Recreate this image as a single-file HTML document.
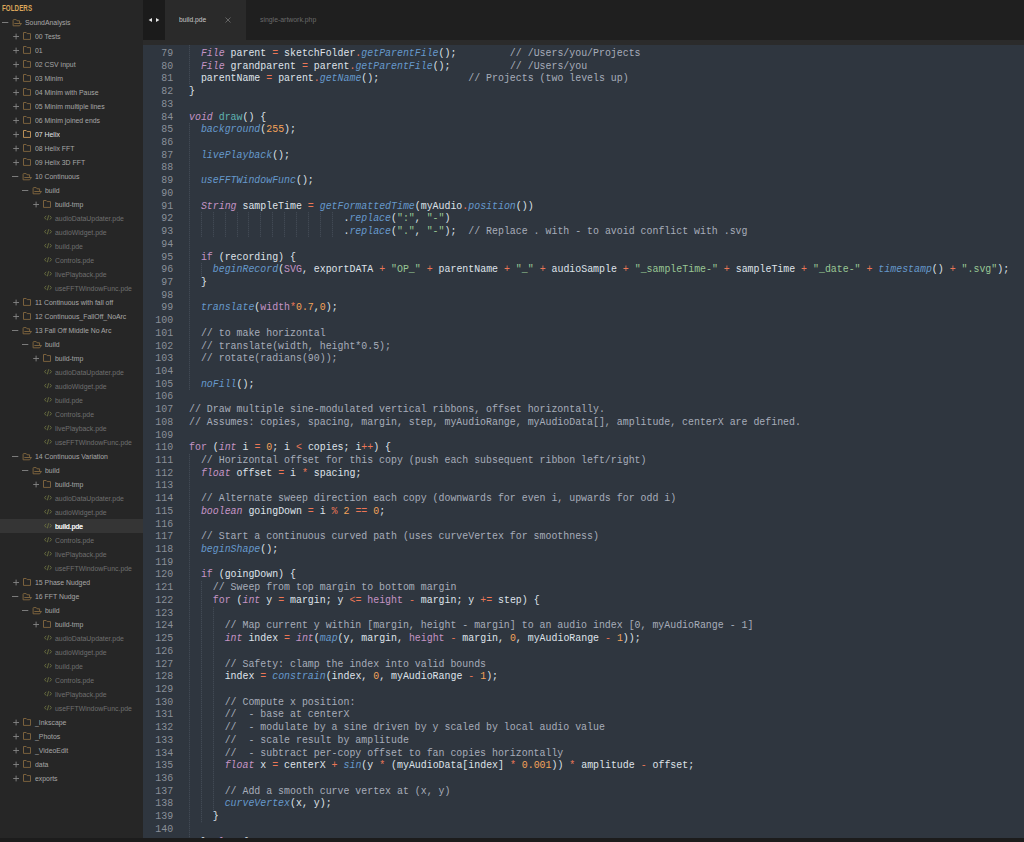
<!DOCTYPE html>
<html><head><meta charset="utf-8">
<style>
html,body{margin:0;padding:0;width:1024px;height:842px;overflow:hidden;background:#262626;}
body{position:relative;font-family:"Liberation Sans",sans-serif;}
#side{position:absolute;left:0;top:0;width:143px;height:842px;background:#262626;overflow:hidden;}
#side .hdr{position:absolute;left:2px;top:3.2px;font:bold 8.4px/10px "Liberation Sans",sans-serif;color:#dba65a;transform:scaleX(.74);transform-origin:0 0;letter-spacing:0.1px;}
.row{position:absolute;left:0;width:143px;height:14px;}
.row.sel{background:#353535;}
.row i{position:absolute;display:block;line-height:0;}
.row i svg{display:block;}
.tg{top:4px;color:#858585;}
.fo{top:3.6px;color:#7f653e;}
.fc{top:3.4px;color:#82673f;}
.fi{top:4.2px;color:#6e7442;}
.nm{position:absolute;top:2.9px;font-size:8px;line-height:10px;white-space:nowrap;transform:scaleX(.86);transform-origin:0 0;color:#a6a6a6;}
.file .nm{color:#6f6f6f;}
.hi .nm{color:#e2e2e2;}
.hi .fc{color:#c9995a;}
.sel .nm{color:#f4f4f4;text-shadow:0.3px 0 0 #f4f4f4;}
#tabs{position:absolute;left:143px;top:0;width:881px;height:40px;background:#1f1f1f;}
#arrows{position:absolute;left:143px;top:0;width:22px;height:40px;background:#1b1b1b;}
#tab1{position:absolute;left:165px;top:0;width:81px;height:40px;background:#2a2a2a;}
#strip{position:absolute;left:143px;top:40px;width:881px;height:5px;background:#2b2b2b;}
#code{position:absolute;left:143px;top:45px;width:881px;height:793px;background:#2f363f;overflow:hidden;}
#bottom{position:absolute;left:0;top:838px;width:1024px;height:4px;background:#1c1c1c;}
#nums{position:absolute;left:0;top:2px;width:30.2px;text-align:right;transform-origin:100% 0 !important;font-family:"Liberation Mono",monospace;color:#8a9099;}
#lines{position:absolute;left:46px;top:2px;font-family:"Liberation Mono",monospace;color:#dfe3ea;white-space:pre;}
#nums div,#lines div{height:12.73px;line-height:12.73px;}
.mono{font-size:11px;transform:scaleX(.9);transform-origin:0 0;}
b{font-weight:normal;}
.gd{position:absolute;width:1px;background:repeating-linear-gradient(to bottom,#414953 0 1px,#343b45 1px 2px);}
b.t{color:#c594c5;font-style:italic;}
b.k{color:#c594c5;}
b.v{color:#c594c5;}
b.f{color:#6699cc;font-style:italic;}
b.e{color:#5fb3b3;}
b.o{color:#ec7656;}
b.n{color:#f4a35a;}
b.s{color:#99c794;}
b.c{color:#a7adba;}
.tabtxt{position:absolute;font-size:8px;line-height:10px;white-space:nowrap;transform:scaleX(.84);transform-origin:0 0;}
</style></head><body>
<div id="side">
<div class="hdr">FOLDERS</div>
<div class="row dir" style="top:15px"><i class="tg" style="left:2.2px"><svg width="7" height="7" viewBox="0 0 7 7"><path d="M0 3.5 H6.3" stroke="currentColor" stroke-width="0.9"/></svg></i><i class="fo" style="left:12.4px"><svg width="11" height="9" viewBox="0 0 11 9"><path d="M1.1 6.8 V1.2 Q1.1 0.6 1.7 0.6 H4.2 L5.1 1.8 H7.6 V4.4 M2.3 4.5 H9.5 L7.7 6.8 H1.1" fill="none" stroke="currentColor" stroke-width="0.95" stroke-linejoin="round"/></svg></i><span class="nm" style="left:25px">SoundAnalysis</span></div>
<div class="row dir" style="top:29px"><i class="tg" style="left:12.5px"><svg width="7" height="7" viewBox="0 0 7 7"><path d="M0.2 3.5 H6 M3.1 0.6 V6.4" stroke="currentColor" stroke-width="0.9"/></svg></i><i class="fc" style="left:22.7px"><svg width="9" height="9" viewBox="0 0 9 9"><path d="M0.5 0.5 H3.2 L4.2 1.6 H7.5 V7.4 H0.5 Z" fill="none" stroke="currentColor" stroke-width="0.9" stroke-linejoin="round"/></svg></i><span class="nm" style="left:35px">00 Tests</span></div>
<div class="row dir" style="top:43px"><i class="tg" style="left:12.5px"><svg width="7" height="7" viewBox="0 0 7 7"><path d="M0.2 3.5 H6 M3.1 0.6 V6.4" stroke="currentColor" stroke-width="0.9"/></svg></i><i class="fc" style="left:22.7px"><svg width="9" height="9" viewBox="0 0 9 9"><path d="M0.5 0.5 H3.2 L4.2 1.6 H7.5 V7.4 H0.5 Z" fill="none" stroke="currentColor" stroke-width="0.9" stroke-linejoin="round"/></svg></i><span class="nm" style="left:35px">01</span></div>
<div class="row dir" style="top:57px"><i class="tg" style="left:12.5px"><svg width="7" height="7" viewBox="0 0 7 7"><path d="M0.2 3.5 H6 M3.1 0.6 V6.4" stroke="currentColor" stroke-width="0.9"/></svg></i><i class="fc" style="left:22.7px"><svg width="9" height="9" viewBox="0 0 9 9"><path d="M0.5 0.5 H3.2 L4.2 1.6 H7.5 V7.4 H0.5 Z" fill="none" stroke="currentColor" stroke-width="0.9" stroke-linejoin="round"/></svg></i><span class="nm" style="left:35px">02 CSV input</span></div>
<div class="row dir" style="top:71px"><i class="tg" style="left:12.5px"><svg width="7" height="7" viewBox="0 0 7 7"><path d="M0.2 3.5 H6 M3.1 0.6 V6.4" stroke="currentColor" stroke-width="0.9"/></svg></i><i class="fc" style="left:22.7px"><svg width="9" height="9" viewBox="0 0 9 9"><path d="M0.5 0.5 H3.2 L4.2 1.6 H7.5 V7.4 H0.5 Z" fill="none" stroke="currentColor" stroke-width="0.9" stroke-linejoin="round"/></svg></i><span class="nm" style="left:35px">03 Minim</span></div>
<div class="row dir" style="top:85px"><i class="tg" style="left:12.5px"><svg width="7" height="7" viewBox="0 0 7 7"><path d="M0.2 3.5 H6 M3.1 0.6 V6.4" stroke="currentColor" stroke-width="0.9"/></svg></i><i class="fc" style="left:22.7px"><svg width="9" height="9" viewBox="0 0 9 9"><path d="M0.5 0.5 H3.2 L4.2 1.6 H7.5 V7.4 H0.5 Z" fill="none" stroke="currentColor" stroke-width="0.9" stroke-linejoin="round"/></svg></i><span class="nm" style="left:35px">04 Minim with Pause</span></div>
<div class="row dir" style="top:99px"><i class="tg" style="left:12.5px"><svg width="7" height="7" viewBox="0 0 7 7"><path d="M0.2 3.5 H6 M3.1 0.6 V6.4" stroke="currentColor" stroke-width="0.9"/></svg></i><i class="fc" style="left:22.7px"><svg width="9" height="9" viewBox="0 0 9 9"><path d="M0.5 0.5 H3.2 L4.2 1.6 H7.5 V7.4 H0.5 Z" fill="none" stroke="currentColor" stroke-width="0.9" stroke-linejoin="round"/></svg></i><span class="nm" style="left:35px">05 Minim multiple lines</span></div>
<div class="row dir" style="top:113px"><i class="tg" style="left:12.5px"><svg width="7" height="7" viewBox="0 0 7 7"><path d="M0.2 3.5 H6 M3.1 0.6 V6.4" stroke="currentColor" stroke-width="0.9"/></svg></i><i class="fc" style="left:22.7px"><svg width="9" height="9" viewBox="0 0 9 9"><path d="M0.5 0.5 H3.2 L4.2 1.6 H7.5 V7.4 H0.5 Z" fill="none" stroke="currentColor" stroke-width="0.9" stroke-linejoin="round"/></svg></i><span class="nm" style="left:35px">06 Minim joined ends</span></div>
<div class="row dir hi" style="top:127px"><i class="tg" style="left:12.5px"><svg width="7" height="7" viewBox="0 0 7 7"><path d="M0.2 3.5 H6 M3.1 0.6 V6.4" stroke="currentColor" stroke-width="0.9"/></svg></i><i class="fc" style="left:22.7px"><svg width="9" height="9" viewBox="0 0 9 9"><path d="M0.5 0.5 H3.2 L4.2 1.6 H7.5 V7.4 H0.5 Z" fill="none" stroke="currentColor" stroke-width="0.9" stroke-linejoin="round"/></svg></i><span class="nm" style="left:35px">07 Helix</span></div>
<div class="row dir" style="top:141px"><i class="tg" style="left:12.5px"><svg width="7" height="7" viewBox="0 0 7 7"><path d="M0.2 3.5 H6 M3.1 0.6 V6.4" stroke="currentColor" stroke-width="0.9"/></svg></i><i class="fc" style="left:22.7px"><svg width="9" height="9" viewBox="0 0 9 9"><path d="M0.5 0.5 H3.2 L4.2 1.6 H7.5 V7.4 H0.5 Z" fill="none" stroke="currentColor" stroke-width="0.9" stroke-linejoin="round"/></svg></i><span class="nm" style="left:35px">08 Helix FFT</span></div>
<div class="row dir" style="top:155px"><i class="tg" style="left:12.5px"><svg width="7" height="7" viewBox="0 0 7 7"><path d="M0.2 3.5 H6 M3.1 0.6 V6.4" stroke="currentColor" stroke-width="0.9"/></svg></i><i class="fc" style="left:22.7px"><svg width="9" height="9" viewBox="0 0 9 9"><path d="M0.5 0.5 H3.2 L4.2 1.6 H7.5 V7.4 H0.5 Z" fill="none" stroke="currentColor" stroke-width="0.9" stroke-linejoin="round"/></svg></i><span class="nm" style="left:35px">09 Helix 3D FFT</span></div>
<div class="row dir" style="top:169px"><i class="tg" style="left:12.2px"><svg width="7" height="7" viewBox="0 0 7 7"><path d="M0 3.5 H6.3" stroke="currentColor" stroke-width="0.9"/></svg></i><i class="fo" style="left:22.4px"><svg width="11" height="9" viewBox="0 0 11 9"><path d="M1.1 6.8 V1.2 Q1.1 0.6 1.7 0.6 H4.2 L5.1 1.8 H7.6 V4.4 M2.3 4.5 H9.5 L7.7 6.8 H1.1" fill="none" stroke="currentColor" stroke-width="0.95" stroke-linejoin="round"/></svg></i><span class="nm" style="left:35px">10 Continuous</span></div>
<div class="row dir" style="top:183px"><i class="tg" style="left:22.2px"><svg width="7" height="7" viewBox="0 0 7 7"><path d="M0 3.5 H6.3" stroke="currentColor" stroke-width="0.9"/></svg></i><i class="fo" style="left:32.4px"><svg width="11" height="9" viewBox="0 0 11 9"><path d="M1.1 6.8 V1.2 Q1.1 0.6 1.7 0.6 H4.2 L5.1 1.8 H7.6 V4.4 M2.3 4.5 H9.5 L7.7 6.8 H1.1" fill="none" stroke="currentColor" stroke-width="0.95" stroke-linejoin="round"/></svg></i><span class="nm" style="left:45px">build</span></div>
<div class="row dir" style="top:197px"><i class="tg" style="left:32.5px"><svg width="7" height="7" viewBox="0 0 7 7"><path d="M0.2 3.5 H6 M3.1 0.6 V6.4" stroke="currentColor" stroke-width="0.9"/></svg></i><i class="fc" style="left:42.7px"><svg width="9" height="9" viewBox="0 0 9 9"><path d="M0.5 0.5 H3.2 L4.2 1.6 H7.5 V7.4 H0.5 Z" fill="none" stroke="currentColor" stroke-width="0.9" stroke-linejoin="round"/></svg></i><span class="nm" style="left:55px">build-tmp</span></div>
<div class="row file" style="top:211px"><i class="fi" style="left:43.5px"><svg width="8" height="6" viewBox="0 0 8 6"><path d="M2.2 0.8 L0.6 2.7 L2.2 4.6 M5.8 0.8 L7.4 2.7 L5.8 4.6 M4.6 0.3 L3.4 5.3" fill="none" stroke="currentColor" stroke-width="0.9"/></svg></i><span class="nm" style="left:55px">audioDataUpdater.pde</span></div>
<div class="row file" style="top:225px"><i class="fi" style="left:43.5px"><svg width="8" height="6" viewBox="0 0 8 6"><path d="M2.2 0.8 L0.6 2.7 L2.2 4.6 M5.8 0.8 L7.4 2.7 L5.8 4.6 M4.6 0.3 L3.4 5.3" fill="none" stroke="currentColor" stroke-width="0.9"/></svg></i><span class="nm" style="left:55px">audioWidget.pde</span></div>
<div class="row file" style="top:239px"><i class="fi" style="left:43.5px"><svg width="8" height="6" viewBox="0 0 8 6"><path d="M2.2 0.8 L0.6 2.7 L2.2 4.6 M5.8 0.8 L7.4 2.7 L5.8 4.6 M4.6 0.3 L3.4 5.3" fill="none" stroke="currentColor" stroke-width="0.9"/></svg></i><span class="nm" style="left:55px">build.pde</span></div>
<div class="row file" style="top:253px"><i class="fi" style="left:43.5px"><svg width="8" height="6" viewBox="0 0 8 6"><path d="M2.2 0.8 L0.6 2.7 L2.2 4.6 M5.8 0.8 L7.4 2.7 L5.8 4.6 M4.6 0.3 L3.4 5.3" fill="none" stroke="currentColor" stroke-width="0.9"/></svg></i><span class="nm" style="left:55px">Controls.pde</span></div>
<div class="row file" style="top:267px"><i class="fi" style="left:43.5px"><svg width="8" height="6" viewBox="0 0 8 6"><path d="M2.2 0.8 L0.6 2.7 L2.2 4.6 M5.8 0.8 L7.4 2.7 L5.8 4.6 M4.6 0.3 L3.4 5.3" fill="none" stroke="currentColor" stroke-width="0.9"/></svg></i><span class="nm" style="left:55px">livePlayback.pde</span></div>
<div class="row file" style="top:281px"><i class="fi" style="left:43.5px"><svg width="8" height="6" viewBox="0 0 8 6"><path d="M2.2 0.8 L0.6 2.7 L2.2 4.6 M5.8 0.8 L7.4 2.7 L5.8 4.6 M4.6 0.3 L3.4 5.3" fill="none" stroke="currentColor" stroke-width="0.9"/></svg></i><span class="nm" style="left:55px">useFFTWindowFunc.pde</span></div>
<div class="row dir" style="top:295px"><i class="tg" style="left:12.5px"><svg width="7" height="7" viewBox="0 0 7 7"><path d="M0.2 3.5 H6 M3.1 0.6 V6.4" stroke="currentColor" stroke-width="0.9"/></svg></i><i class="fc" style="left:22.7px"><svg width="9" height="9" viewBox="0 0 9 9"><path d="M0.5 0.5 H3.2 L4.2 1.6 H7.5 V7.4 H0.5 Z" fill="none" stroke="currentColor" stroke-width="0.9" stroke-linejoin="round"/></svg></i><span class="nm" style="left:35px">11 Continuous with fall off</span></div>
<div class="row dir" style="top:309px"><i class="tg" style="left:12.5px"><svg width="7" height="7" viewBox="0 0 7 7"><path d="M0.2 3.5 H6 M3.1 0.6 V6.4" stroke="currentColor" stroke-width="0.9"/></svg></i><i class="fc" style="left:22.7px"><svg width="9" height="9" viewBox="0 0 9 9"><path d="M0.5 0.5 H3.2 L4.2 1.6 H7.5 V7.4 H0.5 Z" fill="none" stroke="currentColor" stroke-width="0.9" stroke-linejoin="round"/></svg></i><span class="nm" style="left:35px">12 Continuous_FallOff_NoArc</span></div>
<div class="row dir" style="top:323px"><i class="tg" style="left:12.2px"><svg width="7" height="7" viewBox="0 0 7 7"><path d="M0 3.5 H6.3" stroke="currentColor" stroke-width="0.9"/></svg></i><i class="fo" style="left:22.4px"><svg width="11" height="9" viewBox="0 0 11 9"><path d="M1.1 6.8 V1.2 Q1.1 0.6 1.7 0.6 H4.2 L5.1 1.8 H7.6 V4.4 M2.3 4.5 H9.5 L7.7 6.8 H1.1" fill="none" stroke="currentColor" stroke-width="0.95" stroke-linejoin="round"/></svg></i><span class="nm" style="left:35px">13 Fall Off Middle No Arc</span></div>
<div class="row dir" style="top:337px"><i class="tg" style="left:22.2px"><svg width="7" height="7" viewBox="0 0 7 7"><path d="M0 3.5 H6.3" stroke="currentColor" stroke-width="0.9"/></svg></i><i class="fo" style="left:32.4px"><svg width="11" height="9" viewBox="0 0 11 9"><path d="M1.1 6.8 V1.2 Q1.1 0.6 1.7 0.6 H4.2 L5.1 1.8 H7.6 V4.4 M2.3 4.5 H9.5 L7.7 6.8 H1.1" fill="none" stroke="currentColor" stroke-width="0.95" stroke-linejoin="round"/></svg></i><span class="nm" style="left:45px">build</span></div>
<div class="row dir" style="top:351px"><i class="tg" style="left:32.5px"><svg width="7" height="7" viewBox="0 0 7 7"><path d="M0.2 3.5 H6 M3.1 0.6 V6.4" stroke="currentColor" stroke-width="0.9"/></svg></i><i class="fc" style="left:42.7px"><svg width="9" height="9" viewBox="0 0 9 9"><path d="M0.5 0.5 H3.2 L4.2 1.6 H7.5 V7.4 H0.5 Z" fill="none" stroke="currentColor" stroke-width="0.9" stroke-linejoin="round"/></svg></i><span class="nm" style="left:55px">build-tmp</span></div>
<div class="row file" style="top:365px"><i class="fi" style="left:43.5px"><svg width="8" height="6" viewBox="0 0 8 6"><path d="M2.2 0.8 L0.6 2.7 L2.2 4.6 M5.8 0.8 L7.4 2.7 L5.8 4.6 M4.6 0.3 L3.4 5.3" fill="none" stroke="currentColor" stroke-width="0.9"/></svg></i><span class="nm" style="left:55px">audioDataUpdater.pde</span></div>
<div class="row file" style="top:379px"><i class="fi" style="left:43.5px"><svg width="8" height="6" viewBox="0 0 8 6"><path d="M2.2 0.8 L0.6 2.7 L2.2 4.6 M5.8 0.8 L7.4 2.7 L5.8 4.6 M4.6 0.3 L3.4 5.3" fill="none" stroke="currentColor" stroke-width="0.9"/></svg></i><span class="nm" style="left:55px">audioWidget.pde</span></div>
<div class="row file" style="top:393px"><i class="fi" style="left:43.5px"><svg width="8" height="6" viewBox="0 0 8 6"><path d="M2.2 0.8 L0.6 2.7 L2.2 4.6 M5.8 0.8 L7.4 2.7 L5.8 4.6 M4.6 0.3 L3.4 5.3" fill="none" stroke="currentColor" stroke-width="0.9"/></svg></i><span class="nm" style="left:55px">build.pde</span></div>
<div class="row file" style="top:407px"><i class="fi" style="left:43.5px"><svg width="8" height="6" viewBox="0 0 8 6"><path d="M2.2 0.8 L0.6 2.7 L2.2 4.6 M5.8 0.8 L7.4 2.7 L5.8 4.6 M4.6 0.3 L3.4 5.3" fill="none" stroke="currentColor" stroke-width="0.9"/></svg></i><span class="nm" style="left:55px">Controls.pde</span></div>
<div class="row file" style="top:421px"><i class="fi" style="left:43.5px"><svg width="8" height="6" viewBox="0 0 8 6"><path d="M2.2 0.8 L0.6 2.7 L2.2 4.6 M5.8 0.8 L7.4 2.7 L5.8 4.6 M4.6 0.3 L3.4 5.3" fill="none" stroke="currentColor" stroke-width="0.9"/></svg></i><span class="nm" style="left:55px">livePlayback.pde</span></div>
<div class="row file" style="top:435px"><i class="fi" style="left:43.5px"><svg width="8" height="6" viewBox="0 0 8 6"><path d="M2.2 0.8 L0.6 2.7 L2.2 4.6 M5.8 0.8 L7.4 2.7 L5.8 4.6 M4.6 0.3 L3.4 5.3" fill="none" stroke="currentColor" stroke-width="0.9"/></svg></i><span class="nm" style="left:55px">useFFTWindowFunc.pde</span></div>
<div class="row dir" style="top:449px"><i class="tg" style="left:12.2px"><svg width="7" height="7" viewBox="0 0 7 7"><path d="M0 3.5 H6.3" stroke="currentColor" stroke-width="0.9"/></svg></i><i class="fo" style="left:22.4px"><svg width="11" height="9" viewBox="0 0 11 9"><path d="M1.1 6.8 V1.2 Q1.1 0.6 1.7 0.6 H4.2 L5.1 1.8 H7.6 V4.4 M2.3 4.5 H9.5 L7.7 6.8 H1.1" fill="none" stroke="currentColor" stroke-width="0.95" stroke-linejoin="round"/></svg></i><span class="nm" style="left:35px">14 Continuous Variation</span></div>
<div class="row dir" style="top:463px"><i class="tg" style="left:22.2px"><svg width="7" height="7" viewBox="0 0 7 7"><path d="M0 3.5 H6.3" stroke="currentColor" stroke-width="0.9"/></svg></i><i class="fo" style="left:32.4px"><svg width="11" height="9" viewBox="0 0 11 9"><path d="M1.1 6.8 V1.2 Q1.1 0.6 1.7 0.6 H4.2 L5.1 1.8 H7.6 V4.4 M2.3 4.5 H9.5 L7.7 6.8 H1.1" fill="none" stroke="currentColor" stroke-width="0.95" stroke-linejoin="round"/></svg></i><span class="nm" style="left:45px">build</span></div>
<div class="row dir" style="top:477px"><i class="tg" style="left:32.5px"><svg width="7" height="7" viewBox="0 0 7 7"><path d="M0.2 3.5 H6 M3.1 0.6 V6.4" stroke="currentColor" stroke-width="0.9"/></svg></i><i class="fc" style="left:42.7px"><svg width="9" height="9" viewBox="0 0 9 9"><path d="M0.5 0.5 H3.2 L4.2 1.6 H7.5 V7.4 H0.5 Z" fill="none" stroke="currentColor" stroke-width="0.9" stroke-linejoin="round"/></svg></i><span class="nm" style="left:55px">build-tmp</span></div>
<div class="row file" style="top:491px"><i class="fi" style="left:43.5px"><svg width="8" height="6" viewBox="0 0 8 6"><path d="M2.2 0.8 L0.6 2.7 L2.2 4.6 M5.8 0.8 L7.4 2.7 L5.8 4.6 M4.6 0.3 L3.4 5.3" fill="none" stroke="currentColor" stroke-width="0.9"/></svg></i><span class="nm" style="left:55px">audioDataUpdater.pde</span></div>
<div class="row file" style="top:505px"><i class="fi" style="left:43.5px"><svg width="8" height="6" viewBox="0 0 8 6"><path d="M2.2 0.8 L0.6 2.7 L2.2 4.6 M5.8 0.8 L7.4 2.7 L5.8 4.6 M4.6 0.3 L3.4 5.3" fill="none" stroke="currentColor" stroke-width="0.9"/></svg></i><span class="nm" style="left:55px">audioWidget.pde</span></div>
<div class="row file sel" style="top:519px"><i class="fi" style="left:43.5px"><svg width="8" height="6" viewBox="0 0 8 6"><path d="M2.2 0.8 L0.6 2.7 L2.2 4.6 M5.8 0.8 L7.4 2.7 L5.8 4.6 M4.6 0.3 L3.4 5.3" fill="none" stroke="currentColor" stroke-width="0.9"/></svg></i><span class="nm" style="left:55px">build.pde</span></div>
<div class="row file" style="top:533px"><i class="fi" style="left:43.5px"><svg width="8" height="6" viewBox="0 0 8 6"><path d="M2.2 0.8 L0.6 2.7 L2.2 4.6 M5.8 0.8 L7.4 2.7 L5.8 4.6 M4.6 0.3 L3.4 5.3" fill="none" stroke="currentColor" stroke-width="0.9"/></svg></i><span class="nm" style="left:55px">Controls.pde</span></div>
<div class="row file" style="top:547px"><i class="fi" style="left:43.5px"><svg width="8" height="6" viewBox="0 0 8 6"><path d="M2.2 0.8 L0.6 2.7 L2.2 4.6 M5.8 0.8 L7.4 2.7 L5.8 4.6 M4.6 0.3 L3.4 5.3" fill="none" stroke="currentColor" stroke-width="0.9"/></svg></i><span class="nm" style="left:55px">livePlayback.pde</span></div>
<div class="row file" style="top:561px"><i class="fi" style="left:43.5px"><svg width="8" height="6" viewBox="0 0 8 6"><path d="M2.2 0.8 L0.6 2.7 L2.2 4.6 M5.8 0.8 L7.4 2.7 L5.8 4.6 M4.6 0.3 L3.4 5.3" fill="none" stroke="currentColor" stroke-width="0.9"/></svg></i><span class="nm" style="left:55px">useFFTWindowFunc.pde</span></div>
<div class="row dir" style="top:575px"><i class="tg" style="left:12.5px"><svg width="7" height="7" viewBox="0 0 7 7"><path d="M0.2 3.5 H6 M3.1 0.6 V6.4" stroke="currentColor" stroke-width="0.9"/></svg></i><i class="fc" style="left:22.7px"><svg width="9" height="9" viewBox="0 0 9 9"><path d="M0.5 0.5 H3.2 L4.2 1.6 H7.5 V7.4 H0.5 Z" fill="none" stroke="currentColor" stroke-width="0.9" stroke-linejoin="round"/></svg></i><span class="nm" style="left:35px">15 Phase Nudged</span></div>
<div class="row dir" style="top:589px"><i class="tg" style="left:12.2px"><svg width="7" height="7" viewBox="0 0 7 7"><path d="M0 3.5 H6.3" stroke="currentColor" stroke-width="0.9"/></svg></i><i class="fo" style="left:22.4px"><svg width="11" height="9" viewBox="0 0 11 9"><path d="M1.1 6.8 V1.2 Q1.1 0.6 1.7 0.6 H4.2 L5.1 1.8 H7.6 V4.4 M2.3 4.5 H9.5 L7.7 6.8 H1.1" fill="none" stroke="currentColor" stroke-width="0.95" stroke-linejoin="round"/></svg></i><span class="nm" style="left:35px">16 FFT Nudge</span></div>
<div class="row dir" style="top:603px"><i class="tg" style="left:22.2px"><svg width="7" height="7" viewBox="0 0 7 7"><path d="M0 3.5 H6.3" stroke="currentColor" stroke-width="0.9"/></svg></i><i class="fo" style="left:32.4px"><svg width="11" height="9" viewBox="0 0 11 9"><path d="M1.1 6.8 V1.2 Q1.1 0.6 1.7 0.6 H4.2 L5.1 1.8 H7.6 V4.4 M2.3 4.5 H9.5 L7.7 6.8 H1.1" fill="none" stroke="currentColor" stroke-width="0.95" stroke-linejoin="round"/></svg></i><span class="nm" style="left:45px">build</span></div>
<div class="row dir" style="top:617px"><i class="tg" style="left:32.5px"><svg width="7" height="7" viewBox="0 0 7 7"><path d="M0.2 3.5 H6 M3.1 0.6 V6.4" stroke="currentColor" stroke-width="0.9"/></svg></i><i class="fc" style="left:42.7px"><svg width="9" height="9" viewBox="0 0 9 9"><path d="M0.5 0.5 H3.2 L4.2 1.6 H7.5 V7.4 H0.5 Z" fill="none" stroke="currentColor" stroke-width="0.9" stroke-linejoin="round"/></svg></i><span class="nm" style="left:55px">build-tmp</span></div>
<div class="row file" style="top:631px"><i class="fi" style="left:43.5px"><svg width="8" height="6" viewBox="0 0 8 6"><path d="M2.2 0.8 L0.6 2.7 L2.2 4.6 M5.8 0.8 L7.4 2.7 L5.8 4.6 M4.6 0.3 L3.4 5.3" fill="none" stroke="currentColor" stroke-width="0.9"/></svg></i><span class="nm" style="left:55px">audioDataUpdater.pde</span></div>
<div class="row file" style="top:645px"><i class="fi" style="left:43.5px"><svg width="8" height="6" viewBox="0 0 8 6"><path d="M2.2 0.8 L0.6 2.7 L2.2 4.6 M5.8 0.8 L7.4 2.7 L5.8 4.6 M4.6 0.3 L3.4 5.3" fill="none" stroke="currentColor" stroke-width="0.9"/></svg></i><span class="nm" style="left:55px">audioWidget.pde</span></div>
<div class="row file" style="top:659px"><i class="fi" style="left:43.5px"><svg width="8" height="6" viewBox="0 0 8 6"><path d="M2.2 0.8 L0.6 2.7 L2.2 4.6 M5.8 0.8 L7.4 2.7 L5.8 4.6 M4.6 0.3 L3.4 5.3" fill="none" stroke="currentColor" stroke-width="0.9"/></svg></i><span class="nm" style="left:55px">build.pde</span></div>
<div class="row file" style="top:673px"><i class="fi" style="left:43.5px"><svg width="8" height="6" viewBox="0 0 8 6"><path d="M2.2 0.8 L0.6 2.7 L2.2 4.6 M5.8 0.8 L7.4 2.7 L5.8 4.6 M4.6 0.3 L3.4 5.3" fill="none" stroke="currentColor" stroke-width="0.9"/></svg></i><span class="nm" style="left:55px">Controls.pde</span></div>
<div class="row file" style="top:687px"><i class="fi" style="left:43.5px"><svg width="8" height="6" viewBox="0 0 8 6"><path d="M2.2 0.8 L0.6 2.7 L2.2 4.6 M5.8 0.8 L7.4 2.7 L5.8 4.6 M4.6 0.3 L3.4 5.3" fill="none" stroke="currentColor" stroke-width="0.9"/></svg></i><span class="nm" style="left:55px">livePlayback.pde</span></div>
<div class="row file" style="top:701px"><i class="fi" style="left:43.5px"><svg width="8" height="6" viewBox="0 0 8 6"><path d="M2.2 0.8 L0.6 2.7 L2.2 4.6 M5.8 0.8 L7.4 2.7 L5.8 4.6 M4.6 0.3 L3.4 5.3" fill="none" stroke="currentColor" stroke-width="0.9"/></svg></i><span class="nm" style="left:55px">useFFTWindowFunc.pde</span></div>
<div class="row dir" style="top:715px"><i class="tg" style="left:12.5px"><svg width="7" height="7" viewBox="0 0 7 7"><path d="M0.2 3.5 H6 M3.1 0.6 V6.4" stroke="currentColor" stroke-width="0.9"/></svg></i><i class="fc" style="left:22.7px"><svg width="9" height="9" viewBox="0 0 9 9"><path d="M0.5 0.5 H3.2 L4.2 1.6 H7.5 V7.4 H0.5 Z" fill="none" stroke="currentColor" stroke-width="0.9" stroke-linejoin="round"/></svg></i><span class="nm" style="left:35px">_Inkscape</span></div>
<div class="row dir" style="top:729px"><i class="tg" style="left:12.5px"><svg width="7" height="7" viewBox="0 0 7 7"><path d="M0.2 3.5 H6 M3.1 0.6 V6.4" stroke="currentColor" stroke-width="0.9"/></svg></i><i class="fc" style="left:22.7px"><svg width="9" height="9" viewBox="0 0 9 9"><path d="M0.5 0.5 H3.2 L4.2 1.6 H7.5 V7.4 H0.5 Z" fill="none" stroke="currentColor" stroke-width="0.9" stroke-linejoin="round"/></svg></i><span class="nm" style="left:35px">_Photos</span></div>
<div class="row dir" style="top:743px"><i class="tg" style="left:12.5px"><svg width="7" height="7" viewBox="0 0 7 7"><path d="M0.2 3.5 H6 M3.1 0.6 V6.4" stroke="currentColor" stroke-width="0.9"/></svg></i><i class="fc" style="left:22.7px"><svg width="9" height="9" viewBox="0 0 9 9"><path d="M0.5 0.5 H3.2 L4.2 1.6 H7.5 V7.4 H0.5 Z" fill="none" stroke="currentColor" stroke-width="0.9" stroke-linejoin="round"/></svg></i><span class="nm" style="left:35px">_VideoEdit</span></div>
<div class="row dir" style="top:757px"><i class="tg" style="left:12.5px"><svg width="7" height="7" viewBox="0 0 7 7"><path d="M0.2 3.5 H6 M3.1 0.6 V6.4" stroke="currentColor" stroke-width="0.9"/></svg></i><i class="fc" style="left:22.7px"><svg width="9" height="9" viewBox="0 0 9 9"><path d="M0.5 0.5 H3.2 L4.2 1.6 H7.5 V7.4 H0.5 Z" fill="none" stroke="currentColor" stroke-width="0.9" stroke-linejoin="round"/></svg></i><span class="nm" style="left:35px">data</span></div>
<div class="row dir" style="top:771px"><i class="tg" style="left:12.5px"><svg width="7" height="7" viewBox="0 0 7 7"><path d="M0.2 3.5 H6 M3.1 0.6 V6.4" stroke="currentColor" stroke-width="0.9"/></svg></i><i class="fc" style="left:22.7px"><svg width="9" height="9" viewBox="0 0 9 9"><path d="M0.5 0.5 H3.2 L4.2 1.6 H7.5 V7.4 H0.5 Z" fill="none" stroke="currentColor" stroke-width="0.9" stroke-linejoin="round"/></svg></i><span class="nm" style="left:35px">exports</span></div>
</div>
<div id="tabs"></div>
<div id="arrows"></div>
<div id="tab1"></div>
<div class="tabtxt" style="left:179px;top:15px;color:#c8c8c8;">build.pde</div>
<svg style="position:absolute;left:224.5px;top:17px" width="6" height="6" viewBox="0 0 6 6"><path d="M0.5 0.5 L5.5 5.5 M5.5 0.5 L0.5 5.5" stroke="#6c6c6c" stroke-width="0.9"/></svg>
<svg style="position:absolute;left:148px;top:17.5px" width="12" height="4" viewBox="0 0 12 4"><path d="M0.6 2 L4 0 V4 Z M11.4 2 L8 0 V4 Z" fill="#e6e6e6"/></svg>
<div class="tabtxt" style="left:260px;top:15px;color:#6a6a6a;transform:scaleX(.86);">single-artwork.php</div>
<div id="strip"></div>
<div id="code">
<div id="nums" class="mono"><div>79</div><div>80</div><div>81</div><div>82</div><div>83</div><div>84</div><div>85</div><div>86</div><div>87</div><div>88</div><div>89</div><div>90</div><div>91</div><div>92</div><div>93</div><div>94</div><div>95</div><div>96</div><div>97</div><div>98</div><div>99</div><div>100</div><div>101</div><div>102</div><div>103</div><div>104</div><div>105</div><div>106</div><div>107</div><div>108</div><div>109</div><div>110</div><div>111</div><div>112</div><div>113</div><div>114</div><div>115</div><div>116</div><div>117</div><div>118</div><div>119</div><div>120</div><div>121</div><div>122</div><div>123</div><div>124</div><div>125</div><div>126</div><div>127</div><div>128</div><div>129</div><div>130</div><div>131</div><div>132</div><div>133</div><div>134</div><div>135</div><div>136</div><div>137</div><div>138</div><div>139</div><div>140</div><div>141</div></div>
<div class="gd" style="left:46.00px;top:0.00px;height:39.69px"></div><div class="gd" style="left:46.00px;top:77.88px;height:267.33px"></div><div class="gd" style="left:46.00px;top:408.86px;height:394.63px"></div><div class="gd" style="left:57.89px;top:166.99px;height:25.46px"></div><div class="gd" style="left:57.89px;top:217.91px;height:12.73px"></div><div class="gd" style="left:57.89px;top:536.16px;height:241.87px"></div><div class="gd" style="left:69.78px;top:166.99px;height:25.46px"></div><div class="gd" style="left:69.78px;top:561.62px;height:203.68px"></div><div class="gd" style="left:81.67px;top:166.99px;height:25.46px"></div><div class="gd" style="left:93.56px;top:166.99px;height:25.46px"></div><div class="gd" style="left:105.45px;top:166.99px;height:25.46px"></div><div class="gd" style="left:117.34px;top:166.99px;height:25.46px"></div><div class="gd" style="left:129.23px;top:166.99px;height:25.46px"></div><div class="gd" style="left:141.12px;top:166.99px;height:25.46px"></div><div class="gd" style="left:153.01px;top:166.99px;height:25.46px"></div><div class="gd" style="left:164.90px;top:166.99px;height:25.46px"></div><div class="gd" style="left:176.79px;top:166.99px;height:25.46px"></div><div class="gd" style="left:188.68px;top:166.99px;height:25.46px"></div><div id="lines" class="mono"><div class="ln">  <b class="t">File</b> parent <b class="o">=</b> sketchFolder<b class="o">.</b><b class="f">getParentFile</b>();         <b class="c">// /Users/you/Projects</b></div><div class="ln">  <b class="t">File</b> grandparent <b class="o">=</b> parent<b class="o">.</b><b class="f">getParentFile</b>();          <b class="c">// /Users/you</b></div><div class="ln">  parentName <b class="o">=</b> parent<b class="o">.</b><b class="f">getName</b>();               <b class="c">// Projects (two levels up)</b></div><div class="ln">}</div><div class="ln"></div><div class="ln"><b class="t">void</b> <b class="e">draw</b>() {</div><div class="ln">  <b class="f">background</b>(<b class="n">255</b>);</div><div class="ln"></div><div class="ln">  <b class="f">livePlayback</b>();</div><div class="ln"></div><div class="ln">  <b class="f">useFFTWindowFunc</b>();</div><div class="ln"></div><div class="ln">  <b class="t">String</b> sampleTime <b class="o">=</b> <b class="f">getFormattedTime</b>(myAudio<b class="o">.</b><b class="f">position</b>())</div><div class="ln">                          .<b class="f">replace</b>(<b class="s">&quot;:&quot;</b>, <b class="s">&quot;-&quot;</b>)</div><div class="ln">                          .<b class="f">replace</b>(<b class="s">&quot;.&quot;</b>, <b class="s">&quot;-&quot;</b>);  <b class="c">// Replace . with - to avoid conflict with .svg</b></div><div class="ln"></div><div class="ln">  <b class="k">if</b> (recording) {</div><div class="ln">    <b class="f">beginRecord</b>(<b class="v">SVG</b>, exportDATA <b class="o">+</b> <b class="s">&quot;OP_&quot;</b> <b class="o">+</b> parentName <b class="o">+</b> <b class="s">&quot;_&quot;</b> <b class="o">+</b> audioSample <b class="o">+</b> <b class="s">&quot;_sampleTime-&quot;</b> <b class="o">+</b> sampleTime <b class="o">+</b> <b class="s">&quot;_date-&quot;</b> <b class="o">+</b> <b class="f">timestamp</b>() <b class="o">+</b> <b class="s">&quot;.svg&quot;</b>);</div><div class="ln">  }</div><div class="ln"></div><div class="ln">  <b class="f">translate</b>(<b class="v">width</b><b class="o">*</b><b class="n">0.7</b>,<b class="n">0</b>);</div><div class="ln"></div><div class="ln">  <b class="c">// to make horizontal</b></div><div class="ln">  <b class="c">// translate(width, height*0.5);</b></div><div class="ln">  <b class="c">// rotate(radians(90));</b></div><div class="ln"></div><div class="ln">  <b class="f">noFill</b>();</div><div class="ln"></div><div class="ln"><b class="c">// Draw multiple sine-modulated vertical ribbons, offset horizontally.</b></div><div class="ln"><b class="c">// Assumes: copies, spacing, margin, step, myAudioRange, myAudioData[], amplitude, centerX are defined.</b></div><div class="ln"></div><div class="ln"><b class="k">for</b> (<b class="t">int</b> i <b class="o">=</b> <b class="n">0</b>; i <b class="o">&lt;</b> copies; i<b class="o">++</b>) {</div><div class="ln">  <b class="c">// Horizontal offset for this copy (push each subsequent ribbon left/right)</b></div><div class="ln">  <b class="t">float</b> offset <b class="o">=</b> i <b class="o">*</b> spacing;</div><div class="ln"></div><div class="ln">  <b class="c">// Alternate sweep direction each copy (downwards for even i, upwards for odd i)</b></div><div class="ln">  <b class="t">boolean</b> goingDown <b class="o">=</b> i <b class="o">%</b> <b class="n">2</b> <b class="o">==</b> <b class="n">0</b>;</div><div class="ln"></div><div class="ln">  <b class="c">// Start a continuous curved path (uses curveVertex for smoothness)</b></div><div class="ln">  <b class="f">beginShape</b>();</div><div class="ln"></div><div class="ln">  <b class="k">if</b> (goingDown) {</div><div class="ln">    <b class="c">// Sweep from top margin to bottom margin</b></div><div class="ln">    <b class="k">for</b> (<b class="t">int</b> y <b class="o">=</b> margin; y <b class="o">&lt;=</b> <b class="v">height</b> <b class="o">-</b> margin; y <b class="o">+=</b> step) {</div><div class="ln"></div><div class="ln">      <b class="c">// Map current y within [margin, height - margin] to an audio index [0, myAudioRange - 1]</b></div><div class="ln">      <b class="t">int</b> index <b class="o">=</b> <b class="t">int</b>(<b class="f">map</b>(y, margin, <b class="v">height</b> <b class="o">-</b> margin, <b class="n">0</b>, myAudioRange <b class="o">-</b> <b class="n">1</b>));</div><div class="ln"></div><div class="ln">      <b class="c">// Safety: clamp the index into valid bounds</b></div><div class="ln">      index <b class="o">=</b> <b class="f">constrain</b>(index, <b class="n">0</b>, myAudioRange <b class="o">-</b> <b class="n">1</b>);</div><div class="ln"></div><div class="ln">      <b class="c">// Compute x position:</b></div><div class="ln">      <b class="c">//  - base at centerX</b></div><div class="ln">      <b class="c">//  - modulate by a sine driven by y scaled by local audio value</b></div><div class="ln">      <b class="c">//  - scale result by amplitude</b></div><div class="ln">      <b class="c">//  - subtract per-copy offset to fan copies horizontally</b></div><div class="ln">      <b class="t">float</b> x <b class="o">=</b> centerX <b class="o">+</b> <b class="f">sin</b>(y <b class="o">*</b> (myAudioData[index] <b class="o">*</b> <b class="n">0.001</b>)) <b class="o">*</b> amplitude <b class="o">-</b> offset;</div><div class="ln"></div><div class="ln">      <b class="c">// Add a smooth curve vertex at (x, y)</b></div><div class="ln">      <b class="f">curveVertex</b>(x, y);</div><div class="ln">    }</div><div class="ln"></div><div class="ln">  } <b class="k">else</b> {</div></div>
</div>
<div id="bottom"></div>
</body></html>
